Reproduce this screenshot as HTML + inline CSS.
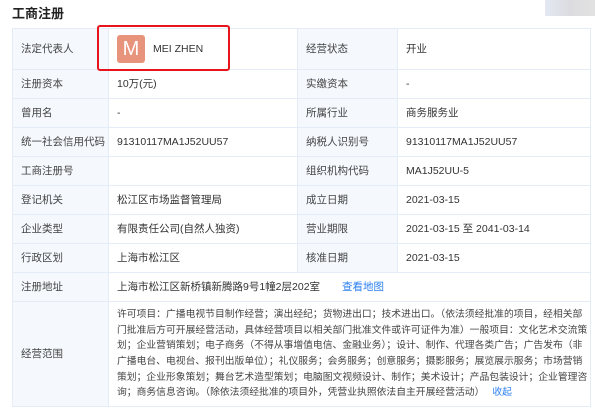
<!DOCTYPE html>
<html><head><meta charset="utf-8"><style>
body{margin:0;width:600px;height:417px;background:#fff;font-family:"Liberation Sans","Noto Sans CJK SC",sans-serif;font-size:10.5px;color:#333;position:relative;overflow:hidden}
h1{position:absolute;left:12px;top:3px;margin:0;font-size:13px;font-weight:bold;color:#222}
table{position:absolute;left:12px;top:28px;width:579px;border-collapse:collapse;table-layout:fixed}
td{border:1px solid #e4ecf7;padding:0 8px;height:28px;white-space:nowrap;overflow:hidden;vertical-align:middle;line-height:14px}
td.l{background:#f5f8fd;color:#444}
.a{color:#2a7ff0}
.logo{position:absolute;left:545px;top:0;width:50px;height:16px;background:linear-gradient(90deg,#e3e8f2,#dcdce0,#e2e2e2)}
.red{position:absolute;left:97px;top:25px;width:129px;height:42px;border:2px solid #e8141c;border-radius:3px}
.av{display:inline-block;width:28px;height:28px;background:#e8937c;color:#fff;border-radius:3px;text-align:center;line-height:28px;font-size:20px;vertical-align:middle;margin-right:8px}
td.sc{line-height:15.7px;font-size:9.8px;color:#444;padding:4px 8px}
</style></head><body>
<h1>工商注册</h1>
<div class="logo"></div>
<table>
<colgroup><col style="width:96px"><col style="width:189px"><col style="width:100px"><col></colgroup>
<tr><td class="l" style="height:40px">法定代表人</td><td><span class="av">M</span>MEI ZHEN</td><td class="l">经营状态</td><td>开业</td></tr>
<tr><td class="l">注册资本</td><td>10万(元)</td><td class="l">实缴资本</td><td>-</td></tr>
<tr><td class="l">曾用名</td><td>-</td><td class="l">所属行业</td><td>商务服务业</td></tr>
<tr><td class="l">统一社会信用代码</td><td>91310117MA1J52UU57</td><td class="l">纳税人识别号</td><td>91310117MA1J52UU57</td></tr>
<tr><td class="l">工商注册号</td><td></td><td class="l">组织机构代码</td><td>MA1J52UU-5</td></tr>
<tr><td class="l">登记机关</td><td>松江区市场监督管理局</td><td class="l">成立日期</td><td>2021-03-15</td></tr>
<tr><td class="l">企业类型</td><td>有限责任公司(自然人独资)</td><td class="l">营业期限</td><td>2021-03-15 至 2041-03-14</td></tr>
<tr><td class="l">行政区划</td><td>上海市松江区</td><td class="l">核准日期</td><td>2021-03-15</td></tr>
<tr><td class="l">注册地址</td><td colspan="3">上海市松江区新桥镇新腾路9号1幢2层202室<span class="a" style="margin-left:22px">查看地图</span></td></tr>
<tr><td class="l" style="height:104px">经营范围</td><td colspan="3" class="sc">许可项目：广播电视节目制作经营；演出经纪；货物进出口；技术进出口。（依法须经批准的项目，经相关部<br>门批准后方可开展经营活动，具体经营项目以相关部门批准文件或许可证件为准）一般项目：文化艺术交流策<br>划；企业营销策划；电子商务（不得从事增值电信、金融业务）；设计、制作、代理各类广告；广告发布（非<br>广播电台、电视台、报刊出版单位）；礼仪服务；会务服务；创意服务；摄影服务；展览展示服务；市场营销<br>策划；企业形象策划；舞台艺术造型策划；电脑图文视频设计、制作；美术设计；产品包装设计；企业管理咨<br>询；商务信息咨询。（除依法须经批准的项目外，凭营业执照依法自主开展经营活动）<span class="a" style="margin-left:8px">收起</span></td></tr>
</table>
<div class="red"></div>
</body></html>
